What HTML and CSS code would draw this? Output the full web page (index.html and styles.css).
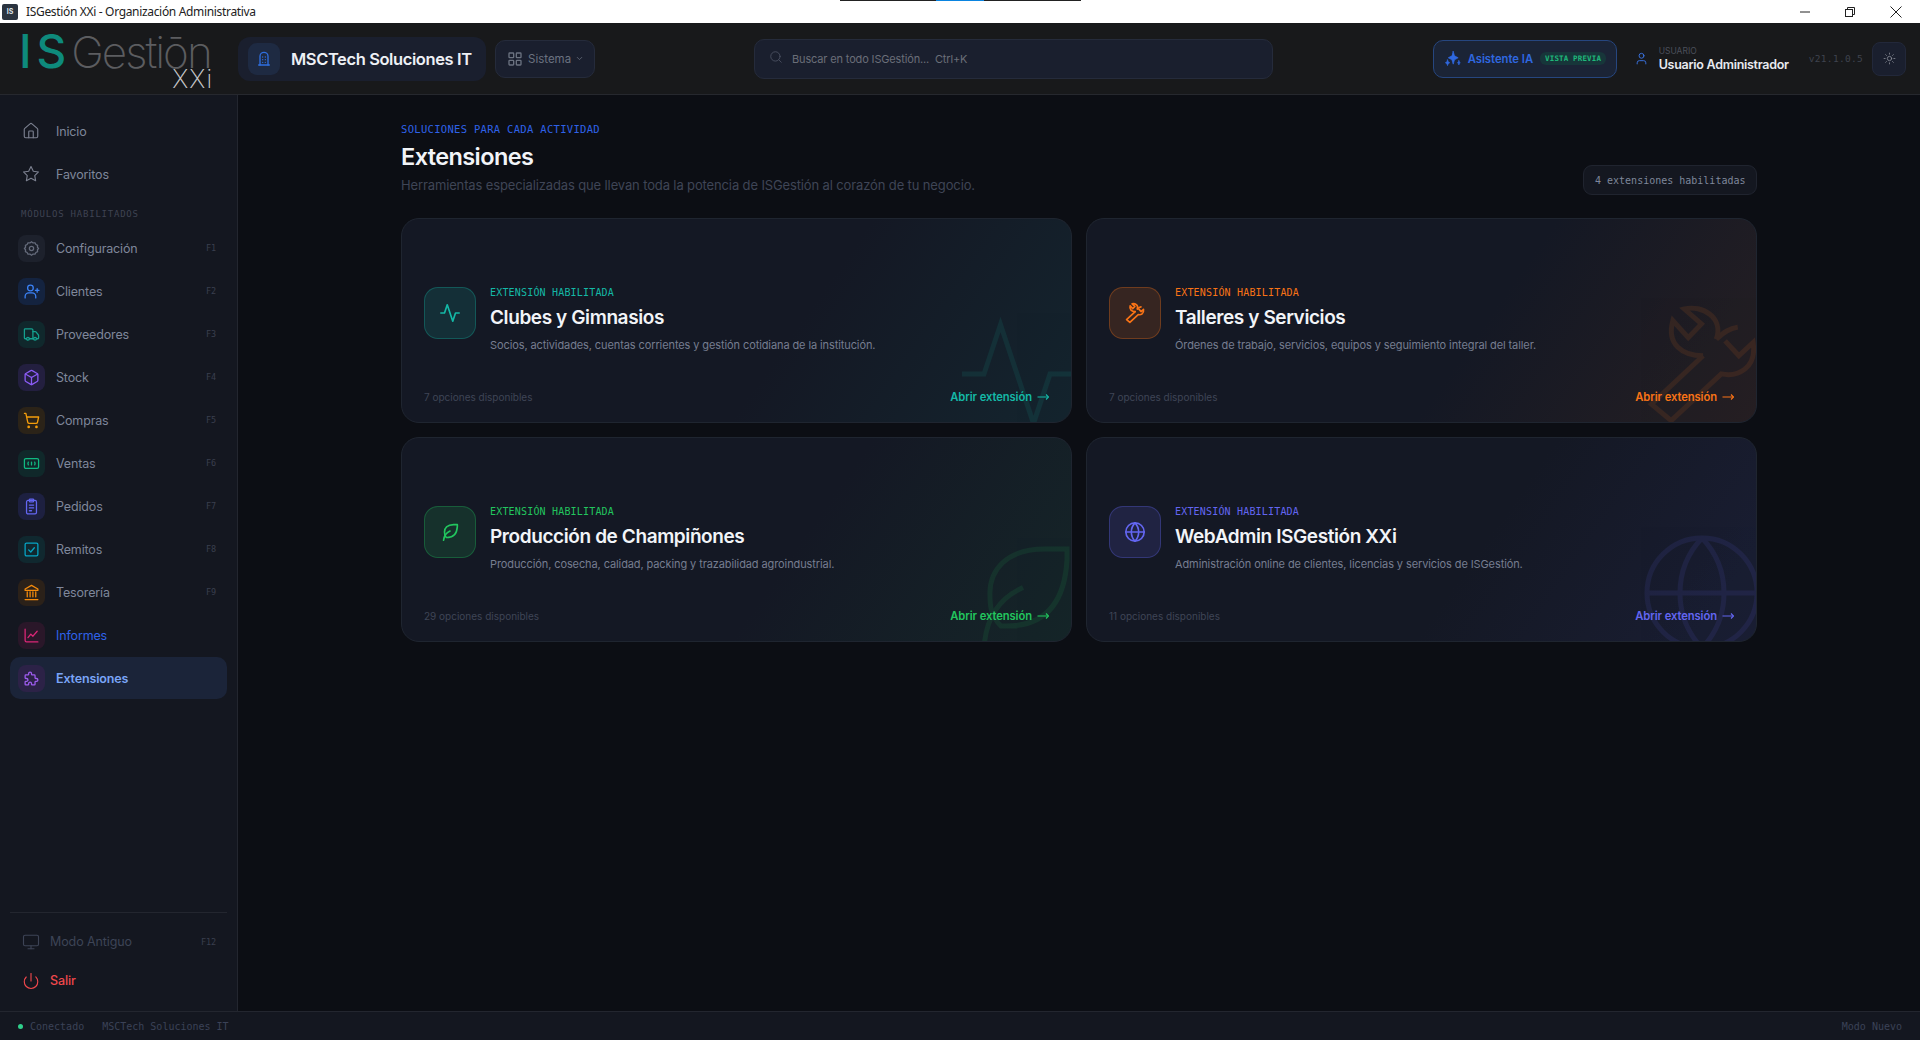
FILE: index.html
```html
<!DOCTYPE html>
<html lang="es">
<head>
  <meta charset="UTF-8" />
  <title>ISGestión XXi - Organización Administrativa</title>
  <link rel="stylesheet" href="styles.css">
</head>
<body>

  <svg class="sprite" xmlns="http://www.w3.org/2000/svg">
    <symbol id="i-home" viewBox="0 0 24 24"><path d="M15 21v-8a1 1 0 0 0-1-1h-4a1 1 0 0 0-1 1v8"/><path d="M3 10a2 2 0 0 1 .7-1.5l7-6a2 2 0 0 1 2.6 0l7 6A2 2 0 0 1 21 10v9a2 2 0 0 1-2 2H5a2 2 0 0 1-2-2z"/></symbol>
    <symbol id="i-star" viewBox="0 0 24 24"><path d="M12 2l3.09 6.26L22 9.27l-5 4.87 1.18 6.88L12 17.77l-6.18 3.25L7 14.14 2 9.27l6.91-1.01z"/></symbol>
    <symbol id="i-gear" viewBox="0 0 24 24"><path d="M12 2.5l2.2 1.6 2.7-.2 1.3 2.4 2.4 1.3-.2 2.7L22 12l-1.6 1.7.2 2.7-2.4 1.3-1.3 2.4-2.7-.2L12 21.5l-2.2-1.6-2.7.2-1.3-2.4-2.4-1.3.2-2.7L2 12l1.6-1.7-.2-2.7 2.4-1.3 1.3-2.4 2.7.2z"/><circle cx="12" cy="12" r="3"/></symbol>
    <symbol id="i-user-plus" viewBox="0 0 24 24"><path d="M3 21v-2a5 5 0 0 1 5-5h5a5 5 0 0 1 5 5v2"/><circle cx="10.5" cy="7" r="4"/><path d="M20 8v5"/><path d="M17.5 10.5h5"/></symbol>
    <symbol id="i-truck" viewBox="0 0 24 24"><path d="M14 18V6a2 2 0 0 0-2-2H3a1 1 0 0 0-1 1v12a1 1 0 0 0 1 1h2"/><path d="M15 18H9"/><path d="M19 18h2a1 1 0 0 0 1-1v-3.65a1 1 0 0 0-.22-.62l-3.48-4.35A1 1 0 0 0 17.52 8H14"/><circle cx="17" cy="18" r="2"/><circle cx="7" cy="18" r="2"/></symbol>
    <symbol id="i-box" viewBox="0 0 24 24"><path d="M21 8a2 2 0 0 0-1-1.73l-7-4a2 2 0 0 0-2 0l-7 4A2 2 0 0 0 3 8v8a2 2 0 0 0 1 1.73l7 4a2 2 0 0 0 2 0l7-4A2 2 0 0 0 21 16z"/><path d="M3.3 7L12 12l8.7-5"/><path d="M12 22V12"/></symbol>
    <symbol id="i-cart" viewBox="0 0 24 24"><circle cx="8" cy="21" r="1"/><circle cx="19" cy="21" r="1"/><path d="M2.05 2.05h2l2.66 12.42a2 2 0 0 0 2 1.58h9.78a2 2 0 0 0 1.95-1.57l1.65-7.43H5.12"/></symbol>
    <symbol id="i-bill" viewBox="0 0 24 24"><rect x="2" y="5" width="20" height="14" rx="2"/><path d="M12 10v4"/><path d="M7.5 10a4 4 0 0 0 0 4"/><path d="M16.5 10a4 4 0 0 1 0 4"/></symbol>
    <symbol id="i-clipboard" viewBox="0 0 24 24"><rect x="9" y="1.5" width="6" height="4" rx="1"/><rect x="5" y="3.5" width="14" height="19" rx="2"/><path d="M9 10h6"/><path d="M9 14h6"/><path d="M9 18h3"/></symbol>
    <symbol id="i-check" viewBox="0 0 24 24"><rect x="3" y="3" width="18" height="18" rx="2"/><path d="M8 12.5l3 3 5-6"/></symbol>
    <symbol id="i-bank" viewBox="0 0 24 24"><path d="M3 22h18"/><path d="M6 18v-7"/><path d="M10 18v-7"/><path d="M14 18v-7"/><path d="M18 18v-7"/><path d="M12 2l9 5v2H3V7z"/></symbol>
    <symbol id="i-chart" viewBox="0 0 24 24"><path d="M3 3v16a2 2 0 0 0 2 2h16"/><path d="M7 15l4-5 3 3 6-7"/></symbol>
    <symbol id="i-puzzle" viewBox="0 0 24 24"><path d="M4 7h3a1 1 0 0 0 1-1V5a2 2 0 0 1 4 0v1a1 1 0 0 0 1 1h3a1 1 0 0 1 1 1v3a1 1 0 0 0 1 1h1a2 2 0 0 1 0 4h-1a1 1 0 0 0-1 1v3a1 1 0 0 1-1 1h-3a1 1 0 0 1-1-1v-1a2 2 0 0 0-4 0v1a1 1 0 0 1-1 1H4a1 1 0 0 1-1-1v-3a1 1 0 0 1 1-1h1a2 2 0 0 0 0-4H4a1 1 0 0 1-1-1V8a1 1 0 0 1 1-1"/></symbol>
    <symbol id="i-monitor" viewBox="0 0 24 24"><rect x="2" y="3" width="20" height="14" rx="2"/><path d="M8 21h8"/><path d="M12 17v4"/></symbol>
    <symbol id="i-power" viewBox="0 0 24 24"><path d="M12 2v10"/><path d="M18.4 6.6a9 9 0 1 1-12.77.04"/></symbol>
    <symbol id="i-building" viewBox="0 0 24 24"><path d="M6 21V8a6 6 0 0 1 12 0v13"/><path d="M4 21h16"/><path d="M10 9h.01"/><path d="M14 9h.01"/><path d="M10 13h.01"/><path d="M14 13h.01"/><path d="M10 17h.01"/><path d="M14 17h.01"/></symbol>
    <symbol id="i-grid" viewBox="0 0 24 24"><rect x="3" y="3" width="7" height="7" rx="1"/><rect x="14" y="3" width="7" height="7" rx="1"/><rect x="3" y="14" width="7" height="7" rx="1"/><rect x="14" y="14" width="7" height="7" rx="1"/></symbol>
    <symbol id="i-chevron" viewBox="0 0 24 24"><path d="M6 9l6 6 6-6"/></symbol>
    <symbol id="i-search" viewBox="0 0 24 24"><circle cx="11" cy="11" r="8"/><path d="M21 21l-4.3-4.3"/></symbol>
    <symbol id="i-sparkles" viewBox="0 0 24 24"><path d="M13 2l1.8 6.2L20 11l-5.200 2.800L13 20l-1.800-6.200L6 11l5.200-2.800z"/><path d="M5 14l.9 2.600L8 18l-2.100 1.400L5 22l-.9-2.600L2 18l2.100-1.400z"/><path d="M21 15l.6 1.900L23 18l-1.400 1.100L21 21l-.6-1.900L19 18l1.400-1.100z"/></symbol>
    <symbol id="i-user" viewBox="0 0 24 24"><circle cx="12" cy="7" r="4.500"/><path d="M4 22v-2a4 4 0 0 1 4-4h8a4 4 0 0 1 4 4v2"/></symbol>
    <symbol id="i-sun" viewBox="0 0 24 24"><circle cx="12" cy="12" r="4"/><path d="M12 2v2"/><path d="M12 20v2"/><path d="M4.900 4.900l1.400 1.400"/><path d="M17.700 17.700l1.400 1.400"/><path d="M2 12h2"/><path d="M20 12h2"/><path d="M6.300 17.700l-1.400 1.400"/><path d="M19.100 4.900l-1.400 1.400"/></symbol>
    <symbol id="i-activity" viewBox="0 0 24 24"><path d="M22 12h-4l-3 9L9 3l-3 9H2"/></symbol>
    <symbol id="i-wrench" viewBox="0 0 24 24"><path d="M12.200 10.500L2.800 19.300l3.600 3 9.100-8.500c3 .6 6.500-1 5.800-5.700l-2.600 2.400-2.500-2.700"/><path d="M12.200 10.500C8.500 10.500 5.500 8.500 6.700 4.100l2.800 3.100 2.400-2.500L8.800 2C12 1.200 16 3.500 14.600 7.500"/><path d="M14.600 7.500c1.400-1.300 2.400-2 3.900-2.200"/></symbol>
    <symbol id="i-leaf" viewBox="0 0 24 24"><path d="M5 21c.5-4.500 2.500-8 7-10"/><path d="M9 18c6.218 0 10.500-3.288 11-12V4h-4.014c-7.200 0-9.986 4-10 8 0 2 0 4 2 6h3"/></symbol>
    <symbol id="i-globe" viewBox="0 0 24 24"><circle cx="12" cy="12" r="10"/><path d="M12 2a14.500 14.500 0 0 0 0 20 14.500 14.500 0 0 0 0-20"/><path d="M2 12h20"/></symbol>
    <symbol id="i-arrow" viewBox="0 0 12 12"><path d="M.5 6h11"/><path d="M9 3.500L11.500 6 9 8.500"/></symbol>
  </svg>

  <!-- barra de ventana -->
  <div class="titlebar">
    <span class="app-icon">IS</span>
    <span class="window-title">ISGestión XXi - Organización Administrativa</span>
    <span class="tab-strip"><i></i></span>
    <div class="window-btns">
      <svg class="win-min" viewBox="0 0 10 10"><path d="M0 5h10"/></svg>
      <svg class="win-max" viewBox="0 0 10 10"><rect x="0.5" y="2.500" width="7" height="7"/><path d="M2.500 2.500V0.500h7v7H7.500"/></svg>
      <svg class="win-close" viewBox="0 0 12 12"><path d="M0.500 0.500l11 11M11.500 0.500l-11 11"/></svg>
    </div>
  </div>

  <header class="topbar">
    <div class="logo">
      <span class="logo-is">IS</span><span class="logo-gestion">Gestiōn</span>
      <span class="logo-xxi">XXi</span>
    </div>

    <div class="org-chip">
      <span class="org-icon"><svg class="icon"><use href="#i-building"/></svg></span>
      <span class="org-name">MSCTech Soluciones IT</span>
    </div>

    <button class="sistema-btn">
      <svg class="icon"><use href="#i-grid"/></svg>
      <span>Sistema</span>
      <svg class="icon chevron"><use href="#i-chevron"/></svg>
    </button>

    <div class="search">
      <svg class="icon"><use href="#i-search"/></svg>
      <span>Buscar en todo ISGestión...&nbsp; Ctrl+K</span>
    </div>

    <div class="top-right">
      <button class="ai-btn">
        <svg class="icon"><use href="#i-sparkles"/></svg>
        <span>Asistente IA</span>
        <span class="ai-badge">VISTA PREVIA</span>
      </button>
      <div class="user">
        <svg class="icon"><use href="#i-user"/></svg>
        <div class="user-text">
          <span class="user-label">USUARIO</span>
          <span class="user-name">Usuario Administrador</span>
        </div>
      </div>
      <span class="version">v21.1.0.5</span>
      <button class="theme-btn"><svg class="icon"><use href="#i-sun"/></svg></button>
    </div>
  </header>

  <div class="layout">
    <aside class="sidebar">
      <nav class="side-nav">
        <a class="nav-item plain"><span class="nav-icon"><svg class="icon"><use href="#i-home"/></svg></span>Inicio</a>
        <a class="nav-item plain"><span class="nav-icon"><svg class="icon"><use href="#i-star"/></svg></span>Favoritos</a>

        <div class="nav-label">MÓDULOS HABILITADOS</div>

        <a class="nav-item c-gray"><span class="nav-icon"><svg class="icon"><use href="#i-gear"/></svg></span>Configuración<kbd>F1</kbd></a>
        <a class="nav-item c-blue"><span class="nav-icon"><svg class="icon"><use href="#i-user-plus"/></svg></span>Clientes<kbd>F2</kbd></a>
        <a class="nav-item c-teal"><span class="nav-icon"><svg class="icon"><use href="#i-truck"/></svg></span>Proveedores<kbd>F3</kbd></a>
        <a class="nav-item c-violet"><span class="nav-icon"><svg class="icon"><use href="#i-box"/></svg></span>Stock<kbd>F4</kbd></a>
        <a class="nav-item c-amber"><span class="nav-icon"><svg class="icon"><use href="#i-cart"/></svg></span>Compras<kbd>F5</kbd></a>
        <a class="nav-item c-emerald"><span class="nav-icon"><svg class="icon"><use href="#i-bill"/></svg></span>Ventas<kbd>F6</kbd></a>
        <a class="nav-item c-indigo"><span class="nav-icon"><svg class="icon"><use href="#i-clipboard"/></svg></span>Pedidos<kbd>F7</kbd></a>
        <a class="nav-item c-cyan"><span class="nav-icon"><svg class="icon"><use href="#i-check"/></svg></span>Remitos<kbd>F8</kbd></a>
        <a class="nav-item c-orange"><span class="nav-icon"><svg class="icon"><use href="#i-bank"/></svg></span>Tesorería<kbd>F9</kbd></a>
        <a class="nav-item c-pink link"><span class="nav-icon"><svg class="icon"><use href="#i-chart"/></svg></span>Informes</a>
        <a class="nav-item c-purple active"><span class="nav-icon"><svg class="icon"><use href="#i-puzzle"/></svg></span>Extensiones</a>
      </nav>

      <div class="side-bottom">
        <a class="bottom-item legacy"><svg class="icon"><use href="#i-monitor"/></svg>Modo Antiguo<kbd>F12</kbd></a>
        <a class="bottom-item salir"><svg class="icon"><use href="#i-power"/></svg>Salir</a>
      </div>
    </aside>

    <main class="main">
      <div class="page">
        <div class="page-head">
          <div>
            <div class="eyebrow">SOLUCIONES PARA CADA ACTIVIDAD</div>
            <h1>Extensiones</h1>
            <p class="lead">Herramientas especializadas que llevan toda la potencia de ISGestión al corazón de tu negocio.</p>
          </div>
          <span class="count-pill">4 extensiones habilitadas</span>
        </div>

        <div class="cards">
          <article class="card teal">
            <svg class="watermark"><use href="#i-activity"/></svg>
            <div class="card-body">
              <span class="card-icon"><svg class="icon"><use href="#i-activity"/></svg></span>
              <div>
                <div class="card-tag">EXTENSIÓN HABILITADA</div>
                <h2>Clubes y Gimnasios</h2>
                <p>Socios, actividades, cuentas corrientes y gestión cotidiana de la institución.</p>
              </div>
            </div>
            <div class="card-foot"><span class="card-count">7 opciones disponibles</span><a class="card-link">Abrir extensión <svg class="arrow"><use href="#i-arrow"/></svg></a></div>
          </article>

          <article class="card orange">
            <svg class="watermark"><use href="#i-wrench"/></svg>
            <div class="card-body">
              <span class="card-icon"><svg class="icon"><use href="#i-wrench"/></svg></span>
              <div>
                <div class="card-tag">EXTENSIÓN HABILITADA</div>
                <h2>Talleres y Servicios</h2>
                <p>Órdenes de trabajo, servicios, equipos y seguimiento integral del taller.</p>
              </div>
            </div>
            <div class="card-foot"><span class="card-count">7 opciones disponibles</span><a class="card-link">Abrir extensión <svg class="arrow"><use href="#i-arrow"/></svg></a></div>
          </article>

          <article class="card green">
            <svg class="watermark"><use href="#i-leaf"/></svg>
            <div class="card-body">
              <span class="card-icon"><svg class="icon"><use href="#i-leaf"/></svg></span>
              <div>
                <div class="card-tag">EXTENSIÓN HABILITADA</div>
                <h2>Producción de Champiñones</h2>
                <p>Producción, cosecha, calidad, packing y trazabilidad agroindustrial.</p>
              </div>
            </div>
            <div class="card-foot"><span class="card-count">29 opciones disponibles</span><a class="card-link">Abrir extensión <svg class="arrow"><use href="#i-arrow"/></svg></a></div>
          </article>

          <article class="card indigo">
            <svg class="watermark"><use href="#i-globe"/></svg>
            <div class="card-body">
              <span class="card-icon"><svg class="icon"><use href="#i-globe"/></svg></span>
              <div>
                <div class="card-tag">EXTENSIÓN HABILITADA</div>
                <h2>WebAdmin ISGestión XXi</h2>
                <p>Administración online de clientes, licencias y servicios de ISGestión.</p>
              </div>
            </div>
            <div class="card-foot"><span class="card-count">11 opciones disponibles</span><a class="card-link">Abrir extensión <svg class="arrow"><use href="#i-arrow"/></svg></a></div>
          </article>
        </div>
      </div>
    </main>
  </div>

  <footer class="statusbar">
    <span class="dot"></span>
    <span>Conectado</span>
    <span class="status-org">MSCTech Soluciones IT</span>
    <span class="status-mode">Modo Nuevo</span>
  </footer>

</body>
</html>
```

FILE: styles.css
```css
* {
  box-sizing: border-box;
}

body {
  margin: 0;
  height: 100vh;
  display: flex;
  flex-direction: column;
  overflow: hidden;
  font-family: 'Inter', sans-serif;
  background-color: #0c0e14;
  color: #e8eaf0;
}

.sprite {
  display: none;
}

.icon {
  width: 16px;
  height: 16px;
  fill: none;
  stroke: currentColor;
  stroke-width: 2;
  stroke-linecap: round;
  stroke-linejoin: round;
  flex-shrink: 0;
}

button {
  font-family: inherit;
}

/* barra de ventana */
.titlebar {
  position: relative;
  height: 23px;
  flex-shrink: 0;
  background: #fff;
  display: flex;
  align-items: center;
  padding-left: 2px;
  color: #222;
}

.app-icon {
  width: 16px;
  height: 16px;
  margin-right: 8px;
  border-radius: 2px;
  background: #2b3440;
  color: #dfe5ea;
  font-size: 7px;
  font-weight: 700;
  display: flex;
  align-items: center;
  justify-content: center;
}

.window-title {
  font-family: 'Noto Sans', sans-serif;
  font-size: 12px;
  letter-spacing: -0.33px;
}

.tab-strip {
  position: absolute;
  left: 840px;
  top: 0;
  width: 241px;
  height: 1px;
  background: #222;
}

.tab-strip i {
  display: block;
  margin-left: 96px;
  width: 48px;
  height: 1px;
  background: #0a84e0;
}

.window-btns {
  margin-left: auto;
  display: flex;
  align-items: center;
  gap: 35px;
  padding-right: 18px;
}

.window-btns svg {
  fill: none;
  stroke: #222;
  stroke-width: 1;
  display: block;
}

.win-min, .win-max {
  width: 10px;
  height: 10px;
}

.win-close {
  width: 12px;
  height: 12px;
}

/* barra superior */
.topbar {
  height: 72px;
  flex-shrink: 0;
  display: flex;
  align-items: center;
  padding-left: 19px;
  background: #18191b;
  border-bottom: 1px solid #26282e;
}

.logo {
  position: relative;
  width: 194px;
  height: 56px;
  margin-right: 25px;
  white-space: nowrap;
  line-height: 40px;
}

.logo-is {
  font-size: 46px;
  font-weight: 500;
  color: #0e8a7c;
  letter-spacing: 5px;
}

.logo-gestion {
  font-size: 44px;
  font-weight: 200;
  color: #5c5d60;
  letter-spacing: -2px;
}

.logo-xxi {
  position: absolute;
  right: 0;
  bottom: 0;
  font-size: 25px;
  font-weight: 200;
  line-height: 16px;
  color: #c9cacc;
  letter-spacing: 1px;
}

.org-chip {
  width: 248px;
  height: 44px;
  display: flex;
  align-items: center;
  gap: 11px;
  padding-left: 10px;
  border-radius: 12px;
  background: #1a1f2e;
}

.org-icon {
  width: 32px;
  height: 32px;
  border-radius: 9px;
  background: #1e2a42;
  color: #2f6fe0;
  display: flex;
  align-items: center;
  justify-content: center;
}

.org-name {
  font-size: 16.500px;
  font-weight: 600;
  letter-spacing: -0.4px;
  color: #eef0f5;
}

.sistema-btn {
  width: 100px;
  height: 38px;
  margin-left: 9px;
  display: flex;
  align-items: center;
  gap: 5px;
  padding: 0 0 0 11px;
  border: 1px solid #252b3b;
  border-radius: 10px;
  background: #1a1f2e;
  color: #6b7280;
  font-size: 11.500px;
}

.sistema-btn .chevron {
  width: 9px;
  height: 9px;
  margin-left: -1px;
}

.search {
  width: 519px;
  height: 40px;
  margin-left: 159px;
  display: flex;
  align-items: center;
  gap: 9px;
  padding-left: 14px;
  border: 1px solid #252b3b;
  border-radius: 10px;
  background: #1a1f2e;
  color: #6a6e78;
  font-size: 11px;
  letter-spacing: -0.15px;
}

.search .icon {
  width: 14px;
  height: 14px;
  margin-top: -3px;
  color: #4b5162;
  stroke-width: 1.500;
}

.top-right {
  margin-left: auto;
  display: flex;
  align-items: center;
  padding-right: 14px;
}

.ai-btn {
  width: 184px;
  height: 38px;
  display: flex;
  align-items: center;
  gap: 7px;
  padding: 0 0 0 10px;
  border: 1px solid #26467f;
  border-radius: 10px;
  background: #1b2436;
  color: #2f68e0;
  font-size: 11.250px;
  font-weight: 600;
}

.ai-btn .icon {
  width: 17px;
  height: 17px;
  fill: currentColor;
  stroke-width: 1;
}

.ai-badge {
  padding: 2px 5px;
  border-radius: 6px;
  background: #17363a;
  color: #1fb87a;
  font-family: 'DejaVu Sans Mono', monospace;
  font-size: 7.500px;
  font-weight: 700;
  letter-spacing: 0.15px;
}

.user {
  margin-left: 18px;
  display: flex;
  align-items: center;
  gap: 11px;
  color: #3b76e8;
}

.user .icon {
  width: 13px;
  height: 15px;
  stroke-width: 1.700;
}

.user-text {
  display: flex;
  flex-direction: column;
  padding-top: 1px;
}

.user-label {
  font-size: 8.500px;
  line-height: 11px;
  color: #4b4f5a;
}

.user-name {
  font-size: 12.500px;
  line-height: 16px;
  font-weight: 600;
  letter-spacing: -0.27px;
  color: #e8eaf0;
}

.version {
  margin-left: 20px;
  font-family: 'DejaVu Sans Mono', monospace;
  font-size: 9.500px;
  letter-spacing: 0.3px;
  color: #3f434e;
}

.theme-btn {
  width: 34px;
  height: 34px;
  margin-left: 9px;
  display: flex;
  align-items: center;
  justify-content: center;
  padding: 0;
  border: 1px solid #22283a;
  border-radius: 8px;
  background: #1a1f2e;
  color: #8a8e98;
}

.theme-btn .icon {
  width: 13px;
  height: 13px;
  stroke-width: 1.500;
}

/* cuerpo */
.layout {
  flex: 1;
  display: flex;
  min-height: 0;
}

.sidebar {
  width: 238px;
  flex-shrink: 0;
  display: flex;
  flex-direction: column;
  padding: 15px 10px 0;
  background: #141720;
  border-right: 1px solid #23262f;
}

.side-nav {
  display: flex;
  flex-direction: column;
  gap: 1px;
}

.nav-item {
  height: 42px;
  display: flex;
  align-items: center;
  gap: 11px;
  padding: 0 11px 0 8px;
  border-radius: 10px;
  font-size: 12.500px;
  letter-spacing: -0.15px;
  color: #7f879b;
}

.nav-icon {
  width: 27px;
  height: 27px;
  border-radius: 8px;
  display: flex;
  align-items: center;
  justify-content: center;
}

.nav-icon .icon {
  width: 17px;
  height: 17px;
  stroke-width: 1.800;
}

.plain .icon {
  width: 18px;
  height: 18px;
  margin-left: -1px;
  stroke-width: 1.500;
  color: #7c8190;
}

.nav-label {
  padding: 11px 0 5px 11px;
  font-family: 'DejaVu Sans Mono', monospace;
  font-size: 9px;
  line-height: 14px;
  letter-spacing: 0.78px;
  color: #3f4352;
}

kbd {
  margin-left: auto;
  font-family: 'DejaVu Sans Mono', monospace;
  font-size: 8.500px;
  color: #3a3f4e;
}

.c-gray .nav-icon { background: #1d212c; color: #656b7b; }
.c-blue .nav-icon { background: #14233f; color: #3b82f6; }
.c-teal .nav-icon { background: #10282c; color: #14a08e; }
.c-violet .nav-icon { background: #231f3f; color: #8b5cf6; }
.c-amber .nav-icon { background: #2b2318; color: #f59e0b; }
.c-emerald .nav-icon { background: #10282a; color: #10b981; }
.c-indigo .nav-icon { background: #1d2040; color: #6366f1; }
.c-cyan .nav-icon { background: #10282f; color: #06a4c4; }
.c-orange .nav-icon { background: #2b2119; color: #f58b0c; }
.c-pink .nav-icon { background: #2a1729; color: #db2777; }
.c-purple .nav-icon { background: #2c2247; color: #9f5df0; }

.link {
  color: #2f62e8;
}

.active {
  background: #1b2439;
  color: #7aa5f8;
  font-weight: 600;
}

.side-bottom {
  margin-top: auto;
  height: 99px;
  padding-top: 9px;
  border-top: 1px solid #23262f;
}

.bottom-item {
  height: 39px;
  display: flex;
  align-items: center;
  padding: 0 11px 0 12px;
  font-size: 12.500px;
  letter-spacing: -0.1px;
}

.bottom-item .icon {
  width: 18px;
  height: 18px;
  margin-right: 10px;
  stroke-width: 1.500;
}

.legacy {
  color: #3d4456;
}

.salir {
  color: #f0484c;
  font-weight: 500;
}

/* contenido */
.main {
  flex: 1;
  min-width: 0;
  background: #0c0e14;
}

.page {
  width: 1356px;
  margin: 0 auto;
  padding-top: 27px;
}

.page-head {
  height: 96px;
  display: flex;
  justify-content: space-between;
  align-items: flex-start;
}

.eyebrow {
  font-family: 'DejaVu Sans Mono', monospace;
  font-size: 10.500px;
  line-height: 14px;
  letter-spacing: 0.31px;
  color: #2f62e8;
}

h1 {
  margin: 6px 0 4px;
  font-size: 23.500px;
  line-height: 30px;
  font-weight: 600;
  letter-spacing: -0.6px;
  color: #f2f4f8;
}

.lead {
  margin: 0;
  font-size: 13px;
  line-height: 18px;
  letter-spacing: -0.13px;
  color: #3f4556;
}

.count-pill {
  height: 30px;
  margin-top: 43px;
  display: flex;
  align-items: center;
  padding: 0 10.500px;
  border: 1px solid #20242f;
  border-radius: 9px;
  background: #141720;
  font-family: 'DejaVu Sans Mono', monospace;
  font-size: 10px;
  color: #7f879b;
}

.cards {
  display: grid;
  grid-template-columns: 1fr 1fr;
  grid-auto-rows: 205px;
  gap: 14px;
}

.card {
  --accent: #14b8a6;
  --accent-rgb: 20, 184, 166;
  position: relative;
  overflow: hidden;
  display: flex;
  flex-direction: column;
  padding: 22px 22px 18px;
  border: 1px solid #1f2530;
  border-radius: 18px;
  background: linear-gradient(125deg, #141824 58%, rgba(var(--accent-rgb), 0.08) 100%), #141824;
}

.card.orange { --accent: #f97316; --accent-rgb: 249, 115, 22; }
.card.green { --accent: #22c55e; --accent-rgb: 34, 197, 94; }
.card.indigo { --accent: #6366f1; --accent-rgb: 99, 102, 241; }

.watermark {
  position: absolute;
  right: -12px;
  bottom: -18px;
  width: 132px;
  height: 132px;
  fill: none;
  stroke: var(--accent);
  stroke-width: 0.9;
  stroke-linecap: butt;
  stroke-linejoin: miter;
  opacity: 0.1;
}

.orange .watermark {
  bottom: -8px;
}

.green .watermark {
  right: -18px;
}

.card-body {
  position: relative;
  margin-top: 46px;
  display: flex;
  gap: 14px;
}

.card-icon {
  width: 52px;
  height: 52px;
  flex-shrink: 0;
  display: flex;
  align-items: center;
  justify-content: center;
  border: 1px solid rgba(var(--accent-rgb), 0.3);
  border-radius: 14px;
  background: rgba(var(--accent-rgb), 0.15);
  color: var(--accent);
}

.card-icon .icon {
  width: 22px;
  height: 22px;
  stroke-width: 1.800;
}

.card-tag {
  font-family: 'DejaVu Sans Mono', monospace;
  font-size: 10px;
  line-height: 12px;
  letter-spacing: 0.18px;
  color: var(--accent);
}

h2 {
  margin: 6px 0 6px;
  font-size: 19px;
  line-height: 26px;
  font-weight: 600;
  letter-spacing: -0.4px;
  color: #f2f4f8;
}

.card p {
  margin: 0;
  font-size: 11px;
  line-height: 16px;
  letter-spacing: -0.1px;
  color: #767d90;
}

.card-foot {
  position: relative;
  margin-top: auto;
  display: flex;
  justify-content: space-between;
  align-items: center;
}

.card-count {
  font-size: 10px;
  color: #3f4556;
}

.card-link {
  display: flex;
  align-items: center;
  gap: 5px;
  font-size: 11.250px;
  font-weight: 600;
  letter-spacing: -0.1px;
  color: var(--accent);
}

.arrow {
  width: 12px;
  height: 12px;
  fill: none;
  stroke: currentColor;
  stroke-width: 1.200;
}

/* barra de estado */
.statusbar {
  height: 29px;
  flex-shrink: 0;
  display: flex;
  align-items: center;
  padding: 0 18px;
  background: #141720;
  border-top: 1px solid #23262f;
  font-family: 'DejaVu Sans Mono', monospace;
  font-size: 10px;
  color: #3b4257;
}

.dot {
  width: 5px;
  height: 5px;
  margin-right: 7px;
  border-radius: 50%;
  background: #2fcf8b;
}

.status-org {
  margin-left: 18px;
}

.status-mode {
  margin-left: auto;
}
```
